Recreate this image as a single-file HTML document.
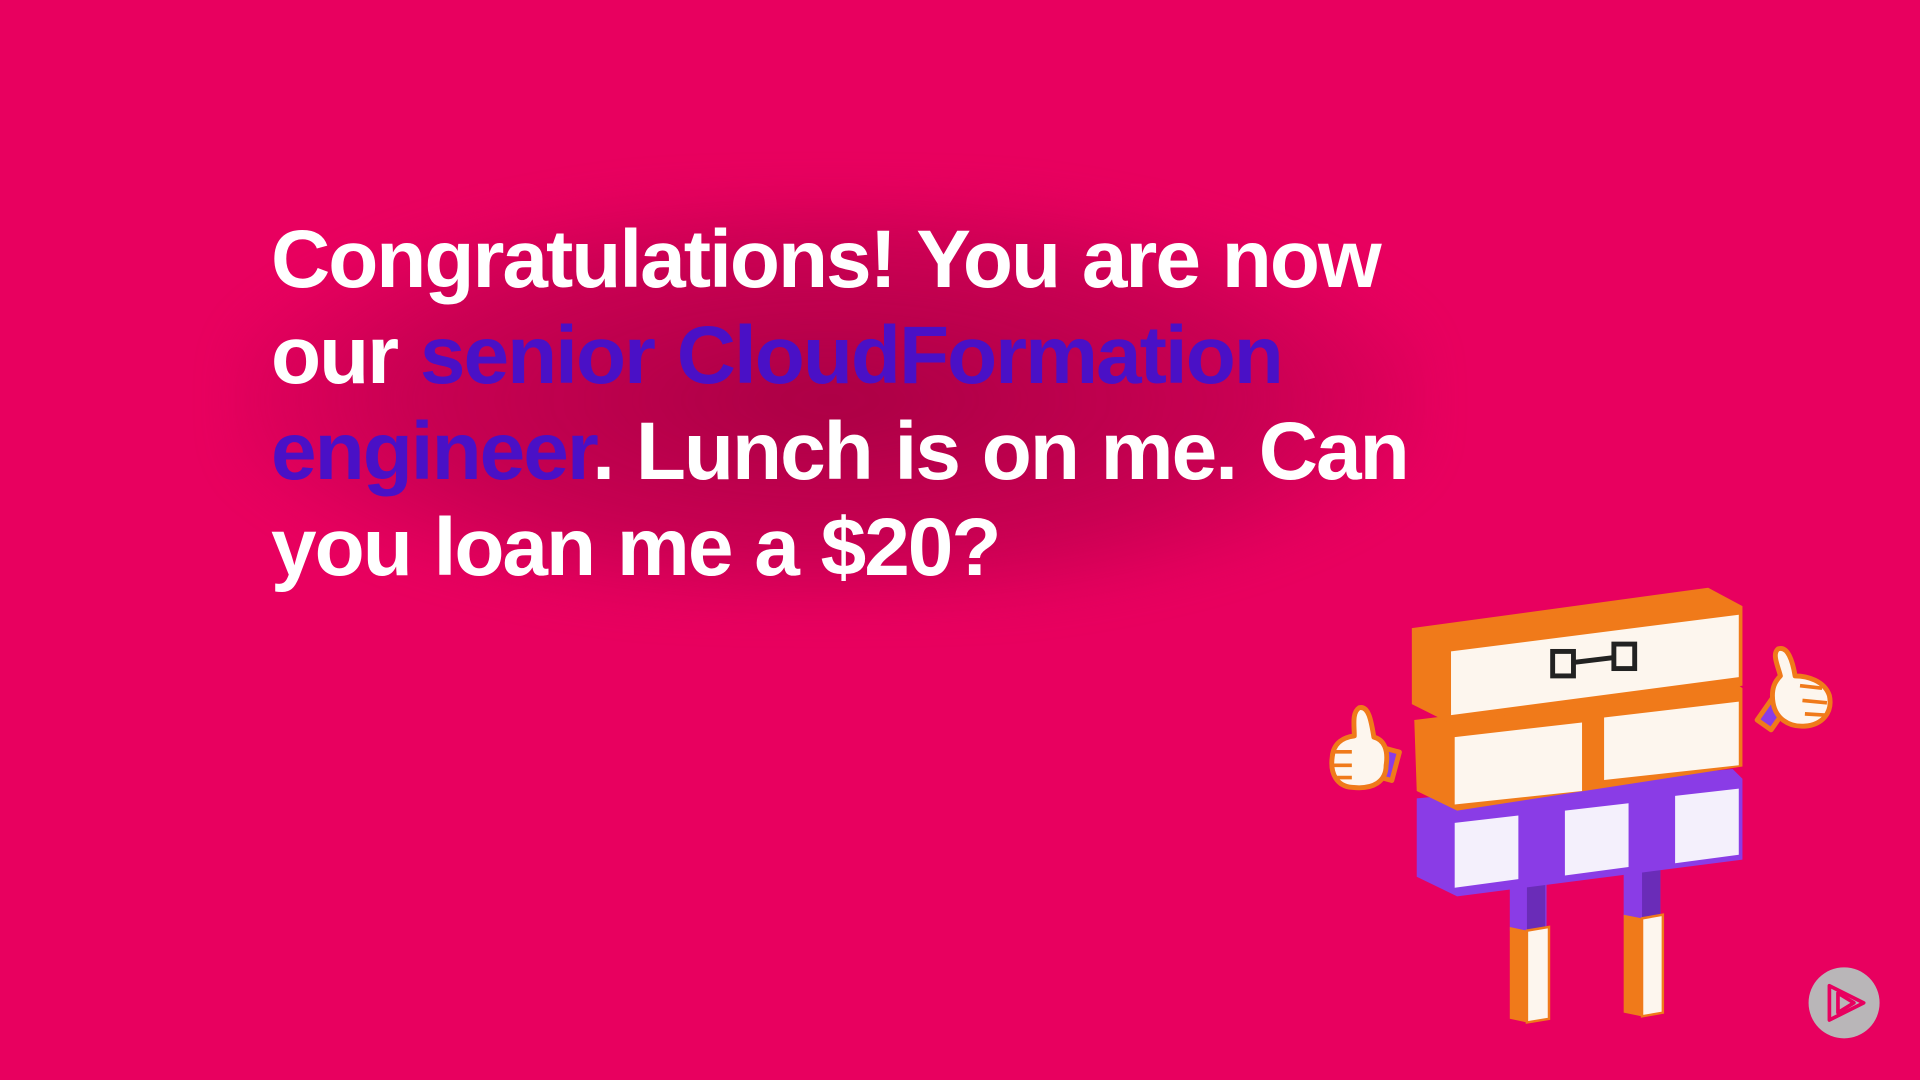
<!DOCTYPE html>
<html><head><meta charset="utf-8"><style>
html,body{margin:0;padding:0;width:1920px;height:1080px;overflow:hidden;background:#e8005f;}
.glow{position:absolute;left:230px;top:190px;width:1200px;height:420px;background:radial-gradient(ellipse at center,rgba(150,0,60,0.75) 0%,rgba(170,0,70,0.5) 50%,rgba(232,0,95,0) 75%);filter:blur(20px);}
.txt{position:absolute;left:271px;top:212px;font-family:"Liberation Sans",sans-serif;font-weight:bold;font-size:82px;line-height:96px;color:#fff;letter-spacing:-2px;word-spacing:2px;white-space:nowrap;}
.p{color:#4a10c6;}
svg{position:absolute;left:0;top:0;}
</style></head><body>
<div class="glow"></div>
<div class="txt">Congratulations! You are now<br>our <span class="p">senior CloudFormation</span><br><span class="p">engineer</span>. Lunch is on me. Can<br>you loan me a $20?</div>
<svg width="1920" height="1080" viewBox="0 0 1568 882">
<g>
<rect x="1233" y="700" width="30" height="60" fill="#8a3ce6"/>
<rect x="1247" y="705" width="15" height="55" fill="#6a2cb8"/>
<polygon points="1233,757 1247,760 1247,835 1233,832" fill="#f07a1a"/>
<polygon points="1247,760 1265,757 1265,832 1247,835" fill="#fdf6ee" stroke="#f07a1a" stroke-width="2"/>
<rect x="1326" y="690" width="30" height="60" fill="#8a3ce6"/>
<rect x="1341" y="695" width="15" height="55" fill="#6a2cb8"/>
<polygon points="1326,747 1341,750 1341,830 1326,827" fill="#f07a1a"/>
<polygon points="1341,750 1358,747 1358,827 1341,830" fill="#fdf6ee" stroke="#f07a1a" stroke-width="2"/>
</g>
<polygon points="1157,652 1415,628 1423,636 1423,702 1190,732 1157,716" fill="#8a3ce6"/>
<polygon points="1188,672 1240,666 1240,718 1188,725" fill="#f4f0fc"/>
<polygon points="1278,662 1330,656 1330,708 1278,715" fill="#f4f0fc"/>
<polygon points="1368,650 1420,644 1420,698 1368,705" fill="#f4f0fc"/>
<polygon points="1155,588 1415,556 1423,562 1423,626 1190,662 1157,646" fill="#f07a1a"/>
<polygon points="1188,602 1292,590 1292,646 1188,657" fill="#fdf6ee"/>
<polygon points="1310,586 1420,573 1420,625 1310,637" fill="#fdf6ee"/>
<polygon points="1153,513 1395,480 1423,495 1423,560 1183,590 1153,575" fill="#f07a1a"/>
<polygon points="1185,532 1420,502 1420,553 1185,584" fill="#fdf6ee"/>
<g fill="none" stroke="#222" stroke-width="4">
<rect x="1268" y="532" width="17" height="20"/>
<rect x="1318" y="526" width="17" height="20"/>
<line x1="1285" y1="541" x2="1318" y2="537"/>
</g>
<g stroke="#f07a1a" stroke-width="4" fill="#fdf6ee" stroke-linejoin="round">
<rect x="1126" y="612" width="14" height="24" fill="#8a3ce6" transform="rotate(15 1133 624)"/>
<path d="M1110,578 C1118,576 1120,590 1122,602 C1130,604 1134,612 1132,625 C1132,638 1122,645 1104,643 C1092,642 1086,632 1088,618 C1089,606 1098,602 1106,601 C1106,592 1104,582 1110,578 Z"/>
<path d="M1090,614 L1104,614 M1089,625 L1104,625 M1092,635 L1104,635" fill="none" stroke-width="3"/>
</g>
<g stroke="#f07a1a" stroke-width="4" fill="#fdf6ee" stroke-linejoin="round">
<rect x="1440" y="572" width="14" height="22" fill="#8a3ce6" transform="rotate(35 1447 583)"/>
<path d="M1452,530 C1460,527 1464,540 1466,552 C1476,552 1490,556 1494,568 C1497,582 1488,592 1474,593 C1460,594 1450,586 1448,574 C1446,562 1450,556 1454,552 C1452,544 1447,534 1452,530 Z"/>
<path d="M1470,560 L1488,562 M1472,572 L1492,574 M1474,583 L1490,584" fill="none" stroke-width="3"/>
</g>
<circle cx="1506" cy="819" r="29" fill="#b9b6b8"/>
<g fill="none" stroke="#e8005f" stroke-width="3" stroke-linejoin="round">
<polygon points="1494,805 1522,819 1494,833"/>
<polygon points="1501,811 1514,819 1501,827"/>
</g>
</svg>
</body></html>
